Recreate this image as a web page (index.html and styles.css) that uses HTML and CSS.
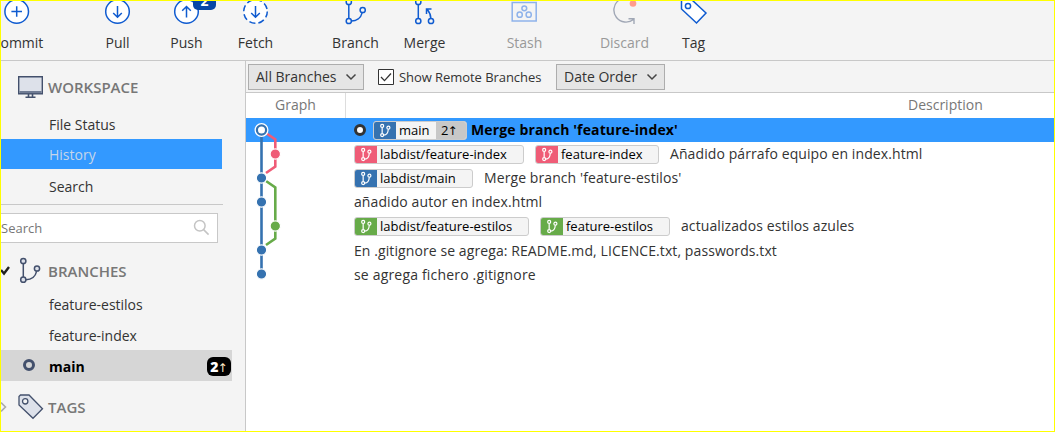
FILE: index.html
```html
<!DOCTYPE html>
<html lang="es">
<head>
<meta charset="utf-8">
<title>History</title>
<link rel="stylesheet" href="styles.css">
</head>
<body>
<svg class="defs" width="0" height="0">
  <symbol id="fork" viewBox="0 0 22 18">
    <g fill="none" stroke="#fff" stroke-width="1.3">
      <circle cx="8" cy="4.2" r="1.6"/><circle cx="8" cy="13.8" r="1.6"/><circle cx="14.6" cy="6" r="1.6"/>
      <path d="M8 5.8v6.4M9.6 13.8c3.2 0 4.6-2.2 4.9-6.2"/>
    </g>
  </symbol>
</svg>
<div class="window">
  <header class="toolbar">
    <div class="tool"><svg viewBox="0 0 69 30"><circle class="ln" cx="33.700" cy="10.500" r="11.800"/><path class="ln" d="M33.700 5.200v10.600M28.400 10.500h10.600"/></svg><span>Commit</span></div>
    <div class="tool group"><svg viewBox="0 0 69 30"><circle class="ln" cx="34.500" cy="10.500" r="11.800"/><path class="ln" d="M34.500 5v11M30.200 12l4.300 4.300 4.300-4.300"/></svg><span>Pull</span></div>
    <div class="tool"><svg viewBox="0 0 69 30"><circle class="ln" cx="34.500" cy="10.500" r="11.800"/><path class="ln" d="M34.500 16.500V5.500M30.200 9.800l4.300-4.300 4.300 4.300"/></svg><b class="count">2</b><span>Push</span></div>
    <div class="tool"><svg viewBox="0 0 69 30"><circle class="ln dash" cx="34.500" cy="10.500" r="11.800"/><path class="ln" d="M34.500 5v11M30.200 12l4.300 4.300 4.300-4.300"/></svg><span>Fetch</span></div>
    <div class="tool group"><svg viewBox="0 0 69 30"><g class="ln"><circle cx="27.800" cy="1" r="2.600"/><circle cx="27.800" cy="20" r="2.600"/><circle cx="41.700" cy="9" r="2.600"/><path d="M27.800 3.600v13.800M30.400 20c5 0 9.500-3 10.800-8.400"/></g></svg><span class="wide">Branch</span></div>
    <div class="tool"><svg viewBox="0 0 69 30"><g class="ln"><circle cx="28.300" cy="1" r="2.600"/><circle cx="28.300" cy="20" r="2.600"/><circle cx="41" cy="20" r="2.600"/><path d="M28.300 3.600v13.800M40.800 17.400c0-3-1-6-3.500-9M36.500 13V8h5"/></g></svg><span class="wide">Merge</span></div>
    <div class="tool group off"><svg viewBox="0 0 69 30"><g class="ln"><path d="M22.200 1.500h24v18.500h-24z"/><circle cx="34.300" cy="7.300" r="2.400"/><circle cx="29.700" cy="13.700" r="2.600"/><circle cx="38.700" cy="13.700" r="2.600"/></g></svg><span>Stash</span></div>
    <div class="tool group off"><svg viewBox="0 0 69 30"><path fill="none" stroke="#a0a7b5" stroke-width="1.400" d="M28.500-.5A11.700 11.700 0 1 0 43.500 18.500M38.500 17.700h5.500v5.300"/><circle cx="43" cy="2.500" r="3.300" fill="#ff9c8c"/></svg><span>Discard</span></div>
    <div class="tool"><svg viewBox="0 0 69 30"><g class="ln"><path fill="#fff" d="M22.500-1v9L37.500 22 47 12 33-1z"/><circle cx="29" cy="5" r="2.600"/></g></svg><span>Tag</span></div>
  </header>
  <div class="body">
    <aside class="side">
      <div class="head first"><svg width="26" height="24" viewBox="0 0 26 24"><path d="M.7 1.700h23.600v17H.7z" fill="#dde1ea" stroke="#43506c" stroke-width="1.400"/><path d="M1.400 16h22.200v2.200H1.400z" fill="#6f7b93"/><path d="M10.500 19v3M14.500 19v3M7.500 22.300h10" stroke="#43506c" stroke-width="1.600"/></svg><span>WORKSPACE</span></div>
      <div class="item"><span>File Status</span></div>
      <div class="item sel"><span>History</span></div>
      <div class="item"><span>Search</span></div>
      <div class="rule"></div>
      <div class="find"><span>Search</span><svg width="18" height="18" viewBox="0 0 18 18"><circle cx="6.800" cy="6.800" r="5.300"/><path d="M10.600 10.600l5 5"/></svg></div>
      <div class="head branches"><svg class="arrow" width="10" height="12" viewBox="0 0 10 12"><path d="M0 5l3 3.500L8 2" fill="none" stroke="#222" stroke-width="2.400"/></svg><svg width="26" height="28" viewBox="0 0 26 28"><g fill="#dde1ea" stroke="#43506c" stroke-width="1.500"><circle cx="5.300" cy="4" r="2.600"/><circle cx="5.300" cy="22.700" r="2.600"/><circle cx="19" cy="11.500" r="2.600"/><path fill="none" d="M5.300 6.600v13.500M7.900 22.700c5.500 0 9.500-3.200 10.800-8.600"/></g></svg><span>BRANCHES</span></div>
      <div class="item"><span>feature-estilos</span></div>
      <div class="item"><span>feature-index</span></div>
      <div class="item current"><i class="ring"></i><span>main</span><b class="ahead">2<em>↑</em></b></div>
      <div class="head tags"><svg class="arrow" width="10" height="12" viewBox="0 0 10 12"><path d="M0 1.500L4.500 6 0 10.500" fill="none" stroke="#aaa" stroke-width="1.600"/></svg><svg width="26" height="26" viewBox="0 0 26 26"><path d="M1 2.500L2.500 1H11L24.500 14.700 15 24.300 1 11z" fill="#dde1ea" stroke="#43506c" stroke-width="1.300"/><circle cx="7.200" cy="7.300" r="2.700" fill="#f4f4f4" stroke="#43506c" stroke-width="1.300"/></svg><span>TAGS</span></div>
    </aside>
    <main class="main">
      <div class="filters">
        <div class="select all"><span>All Branches</span><svg width="12" height="8" viewBox="0 0 12 8"><path d="M1.500 1.500L6 6l4.500-4.500"/></svg></div>
        <div class="check"><svg width="16" height="16" viewBox="0 0 16 16"><path d="M.5.5h15v15H.5z" fill="#fff" stroke="#333"/><path d="M3 8l3.500 3.600L13 4.500" fill="none" stroke="#333" stroke-width="1.300"/></svg><span>Show Remote Branches</span></div>
        <div class="select date"><span>Date Order</span><svg width="12" height="8" viewBox="0 0 12 8"><path d="M1.500 1.500L6 6l4.500-4.500"/></svg></div>
      </div>
      <div class="cols"><div class="c-graph">Graph</div><div class="c-desc">Description</div></div>
      <div class="log">
        <div class="row active"><i class="ring"></i><div class="pill blue w-main"><svg><use href="#fork"/></svg><span>main</span><em>2<i class="up">↑</i></em></div><span class="msg">Merge branch 'feature-index'</span></div>
        <div class="row"><div class="pill red w-lidx"><svg><use href="#fork"/></svg><span>labdist/feature-index</span></div><div class="pill red w-idx"><svg><use href="#fork"/></svg><span>feature-index</span></div><span class="msg">Añadido párrafo equipo en index.html</span></div>
        <div class="row"><div class="pill blue w-lmain"><svg><use href="#fork"/></svg><span>labdist/main</span></div><span class="msg">Merge branch 'feature-estilos'</span></div>
        <div class="row"><span class="msg">añadido autor en index.html</span></div>
        <div class="row"><div class="pill green w-lest"><svg><use href="#fork"/></svg><span>labdist/feature-estilos</span></div><div class="pill green w-est"><svg><use href="#fork"/></svg><span>feature-estilos</span></div><span class="msg">actualizados estilos azules</span></div>
        <div class="row low"><span class="msg">En .gitignore se agrega: README.md, LICENCE.txt, passwords.txt</span></div>
        <div class="row low"><span class="msg last">se agrega fichero .gitignore</span></div>
        <svg class="graph" width="60" height="168" viewBox="0 0 60 168">
          <g fill="none" stroke-width="2.600">
            <path stroke="#3572b0" d="M15.500 12v144"/>
            <path stroke="#ef5c77" d="M20 15l9.300 6.500v27L20 55"/>
            <path stroke="#67ab49" d="M20 63l9.300 6.500v51L20 127"/>
          </g>
          <g stroke="#fff" stroke-width="1.200">
            <g fill="#3572b0"><circle cx="15.500" cy="60" r="5.200"/><circle cx="15.500" cy="84" r="5.200"/><circle cx="15.500" cy="132" r="5.200"/><circle cx="15.500" cy="156" r="5.200"/></g>
            <circle cx="29.300" cy="36" r="5.200" fill="#ef5c77"/><circle cx="29.300" cy="108" r="5.200" fill="#67ab49"/>
          </g>
          <circle cx="15.500" cy="12" r="7" fill="#fff"/><circle cx="15.500" cy="12" r="4.600" fill="#fff" stroke="#3572b0" stroke-width="2.200"/>
        </svg>
      </div>
    </main>
  </div>
</div>
</body>
</html>
```
FILE: styles.css
```css
* { box-sizing: border-box; }
body { margin: 0; background: #fff; font: 14px/20px "Open Sans", "Noto Sans", sans-serif; color: #333; }
.defs { position: absolute; }
span { white-space: nowrap; }
.window { width: 1055px; height: 432px; border: 1px solid #ff0; overflow: hidden; display: flex; flex-direction: column; background: #f4f4f4; }
.toolbar { height: 60px; flex: none; border-bottom: 1px solid #c8c8c8; display: flex; margin-left: -18px; }
.tool { width: 69px; flex: none; position: relative; display: flex; flex-direction: column; align-items: center; }
.tool.group { margin-left: 31px; }
.tool svg { width: 69px; height: 30px; margin-bottom: 2px; flex: none; }
.ln { fill: none; stroke: #0f5bd0; stroke-width: 1.5; }
circle.ln { fill: #fff; }
.dash { stroke-dasharray: 6.2 3.067; }
.off { color: #999; }
.off .ln { stroke: #8eb2ea; }
.count { position: absolute; left: 41px; top: -9px; width: 23px; height: 18px; border-radius: 5px; background: #0747a6; color: #fff; font-size: 14px; line-height: 17px; text-align: center; }
.body { flex: 1; min-height: 0; display: flex; }
.side { width: 245px; flex: none; border-right: 1px solid #c8c8c8; overflow: hidden; }
.head { display: flex; align-items: center; height: 32px; padding-left: 17px; position: relative; color: #777; font-weight: 600; font-size: 15px; }
.head svg:not(.arrow) { margin-right: 4px; flex: none; }
.head.first { margin-top: 10px; margin-bottom: 5px; }
.head.tags { margin-top: 10px; }
.arrow { position: absolute; left: 0; top: 10px; }
.item { height: 31px; display: flex; align-items: center; padding: 2px 0 0 48px; }
.sel { width: 221px; height: 30px; background: #39f; color: #c5d5ea; margin-bottom: 1px; }
.rule { width: 222px; height: 1px; background: #c8c8c8; margin-top: 3px; }
.find { width: 218px; height: 30px; margin: 8px 0 12px -1px; border: 1px solid #c8c8c8; background: #fff; color: #777; font-size: 13px; display: flex; align-items: center; justify-content: space-between; padding-right: 6px; }
.find svg { fill: none; stroke: #c4c4c4; stroke-width: 1.5; }
.branches { margin-bottom: 1px; }
.current { width: 231px; background: #d6d6d6; color: #000; font-weight: 700; padding-left: 22px; }
.ring { width: 12px; height: 12px; border-radius: 50%; border: 3px solid #43506c; background: #fff; flex: none; }
.current .ring { margin: 0 14px 4px 0; background: #d6d6d6; }
.ahead { margin: 0 1px 1px auto; width: 24px; height: 19px; border-radius: 6px; background: #000; color: #fff; line-height: 19px; text-align: center; font-size: 14px; }
em { font-style: normal; }
.ahead em, .up { font-family: "DejaVu Sans", sans-serif; font-style: normal; font-weight: 400; font-size: 12px; margin-left: -1px; }
.ahead em { color: #ffe9c4; }
.main { flex: 1; min-width: 0; background: #fff; }
.filters { height: 32px; background: #f4f4f4; border-bottom: 1px solid #c8c8c8; display: flex; align-items: center; padding-left: 2px; }
.select { height: 26px; border: 1px solid #adadad; background: #e5e5e5; display: flex; align-items: center; justify-content: space-between; padding: 0 6px 0 7px; }
.select svg { fill: none; stroke: #444; stroke-width: 1.5; }
.all { width: 116px; }
.date { width: 109px; }
.check { display: flex; align-items: center; gap: 5px; width: 178px; margin-left: 14px; font-size: 13px; letter-spacing: -.06px; }
.cols { height: 25px; display: flex; color: #777; line-height: 24px; }
.c-graph { width: 100px; border-right: 1px solid #ddd; text-align: center; }
.c-desc { flex: 1; padding-left: 562px; }
.log { position: relative; }
.row { height: 24px; display: flex; align-items: center; padding-left: 108px; }
.low { padding-top: 2px; }
.msg, .wide { letter-spacing: .09px; }
.last { letter-spacing: .18px; }
.active { background: #39f; color: #000; font-weight: 700; }
.active .msg { letter-spacing: .13px; }
.active .ring { border-color: #333; margin-right: 7px; }
.pill { height: 19px; border: 1px solid #ccc; border-radius: 3px; background: #f4f4f4; color: #000; font-size: 13px; font-weight: 400; line-height: 17px; display: flex; overflow: hidden; margin-right: 11px; flex: none; }
.pill svg { width: 22px; height: 17px; flex: none; margin-right: 3px; }
.blue svg { background: #3572b0; }
.red svg { background: #ef5c77; }
.green svg { background: #67ab49; }
.pill em { margin-left: auto; width: 30px; background: #c8c8c8; padding-left: 5px; }
.w-main { width: 94px; margin-right: 4px; }
.w-lidx { width: 170px; }
.w-idx { width: 124px; }
.w-lmain { width: 119px; }
.w-lest { width: 175px; }
.w-est { width: 130px; }
.graph { position: absolute; left: 0; top: 0; }
```
